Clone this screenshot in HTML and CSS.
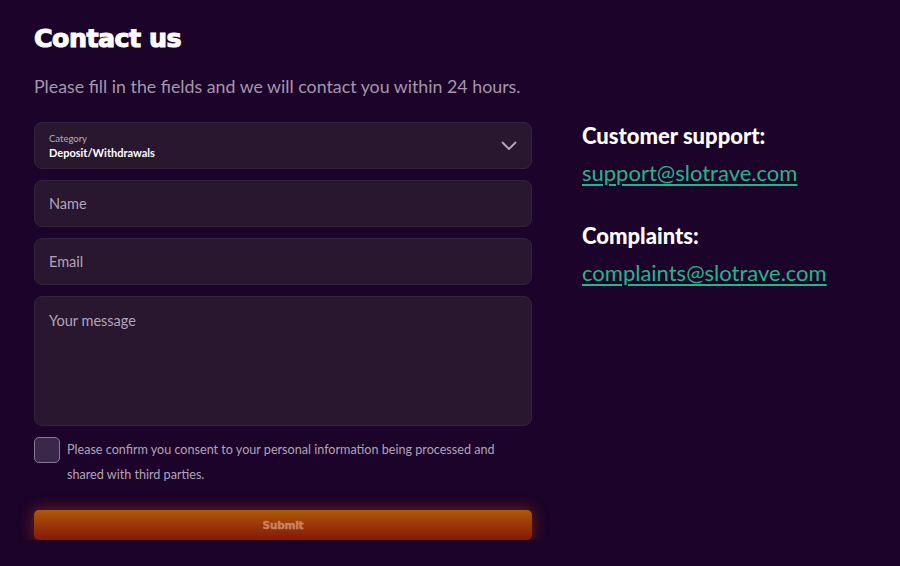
FILE: index.html
```html
<!DOCTYPE html>
<html lang="en">
<head>
<meta charset="utf-8">
<title>Contact us</title>
<link rel="stylesheet" href="styles.css">
</head>
<body>
<main class="page">
  <h1 class="title">Contact us</h1>
  <p class="subtitle">Please fill in the fields and we will contact you within 24 hours.</p>
  <div class="columns">
    <form class="form">
      <div class="field select">
        <div class="select-text">
          <span class="select-label">Category</span>
          <span class="select-value">Deposit/Withdrawals</span>
        </div>
        <svg class="chevron" width="16" height="10" viewBox="0 0 16 10"><path d="M1.5 1.5 L8 8 L14.5 1.5" fill="none" stroke="#b6a6c0" stroke-width="1.8" stroke-linecap="round" stroke-linejoin="round"/></svg>
      </div>
      <div class="field input"><span class="placeholder">Name</span></div>
      <div class="field input"><span class="placeholder">Email</span></div>
      <div class="field textarea"><span class="placeholder">Your message</span></div>
      <label class="consent">
        <span class="checkbox"></span>
        <span class="consent-text">Please confirm you consent to your personal information being processed and shared with third parties.</span>
      </label>
      <button type="button" class="submit">Submit</button>
    </form>
    <aside class="contacts">
      <h2 class="contact-title">Customer support:</h2>
      <a class="contact-link" href="#">support@slotrave.com</a>
      <h2 class="contact-title second">Complaints:</h2>
      <a class="contact-link" href="#">complaints@slotrave.com</a>
    </aside>
  </div>
</main>
</body>
</html>
```

FILE: styles.css
```css
html, body {
  margin: 0;
  padding: 0;
  background: #1c0329;
  font-family: "Lato", "Open Sans", sans-serif;
}

.page {
  padding: 23px 34px 0 34px;
}

.title {
  margin: 0;
  font-family: "DejaVu Sans", sans-serif;
  font-weight: 700;
  font-size: 25.3px;
  line-height: 32px;
  color: #ffffff;
  letter-spacing: -0.5px;
  -webkit-text-stroke: 1.1px #ffffff;
}

.subtitle {
  margin: 19px 0 0 0;
  font-size: 17.8px;
  line-height: 24px;
  color: #a697ae;
}

.columns {
  display: flex;
  gap: 50px;
  margin-top: 24px;
}

.form {
  width: 498px;
  display: flex;
  flex-direction: column;
  gap: 11px;
}

.field {
  box-sizing: border-box;
  background: #28172f;
  border: 1px solid #34233d;
  border-radius: 8px;
  padding: 0 14px;
}

.select {
  height: 47px;
  display: flex;
  align-items: center;
  justify-content: space-between;
}

.select-text {
  display: flex;
  flex-direction: column;
  padding-top: 2px;
}

.select-label {
  font-size: 9.5px;
  line-height: 12px;
  color: #b8aabf;
}

.select-value {
  font-size: 11px;
  line-height: 16px;
  font-weight: 700;
  color: #ffffff;
}

.input {
  height: 47px;
  display: flex;
  align-items: center;
}

.textarea {
  height: 130px;
  padding-top: 13px;
}

.placeholder {
  font-size: 14.5px;
  line-height: 18px;
  color: #b2a4ba;
}

.consent {
  display: flex;
  align-items: flex-start;
  gap: 7px;
}

.checkbox {
  flex: none;
  box-sizing: border-box;
  width: 26px;
  height: 26px;
  border: 1.5px solid #8b7a94;
  border-radius: 5px;
  background: #3b2749;
}

.consent-text {
  font-size: 12.6px;
  line-height: 25px;
  color: #b2a4ba;
}

.submit {
  margin-top: 12px;
  height: 30px;
  width: 100%;
  border: none;
  border-radius: 5px;
  background: linear-gradient(180deg, #ad5a08 0%, #9a3606 50%, #86180a 100%);
  box-shadow: 0 0 14px 2px rgba(180, 60, 10, 0.45);
  color: #c98366;
  font-family: "DejaVu Sans", sans-serif;
  font-weight: 700;
  font-size: 10.5px;
  letter-spacing: -0.2px;
  -webkit-text-stroke: 0.4px #c98366;
  cursor: pointer;
}

.contacts {
  display: flex;
  flex-direction: column;
  align-items: flex-start;
}

.contact-title {
  margin: 0 0 8px 0;
  font-size: 22px;
  line-height: 28px;
  font-weight: 900;
  color: #ffffff;
}

.contact-title.second {
  margin-top: 34px;
}

.contact-link {
  font-size: 22px;
  line-height: 30px;
  color: #27b48a;
  text-decoration: underline;
  text-underline-offset: 3px;
  text-decoration-thickness: 1.5px;
}
```
